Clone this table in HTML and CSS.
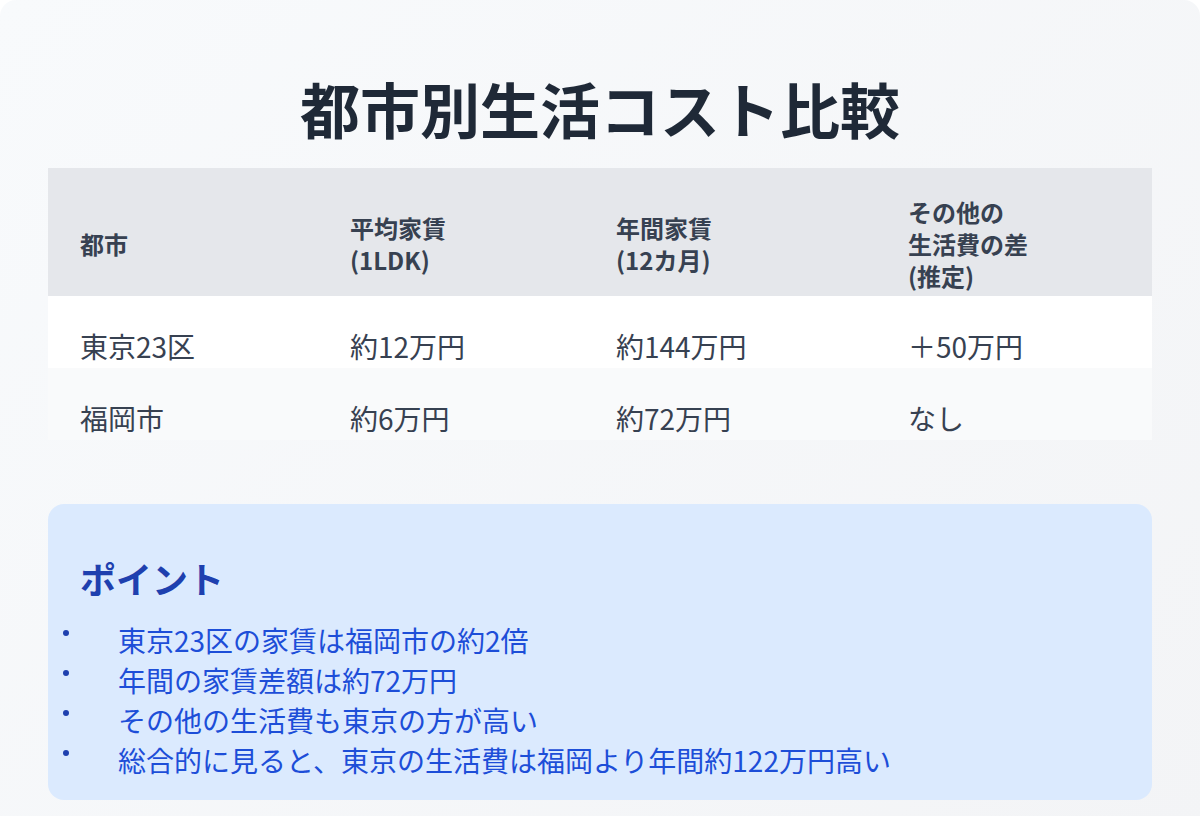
FILE: index.html
```html
<!DOCTYPE html>
<html lang="ja">
<head>
<meta charset="utf-8">
<title>都市別生活コスト比較</title>
<link rel="stylesheet" href="styles.css">
</head>
<body>
<main class="card">
  <h1 class="title">都市別生活コスト比較</h1>
  <table class="cost-table">
    <colgroup>
      <col class="c1"><col class="c2"><col class="c3"><col class="c4">
    </colgroup>
    <thead>
      <tr>
        <th>都市</th>
        <th>平均家賃<br>(1LDK)</th>
        <th>年間家賃<br>(12カ月)</th>
        <th>その他の<br>生活費の差<br>(推定)</th>
      </tr>
    </thead>
    <tbody>
      <tr class="row-a">
        <td>東京23区</td>
        <td>約12万円</td>
        <td>約144万円</td>
        <td>＋50万円</td>
      </tr>
      <tr class="row-b">
        <td>福岡市</td>
        <td>約6万円</td>
        <td>約72万円</td>
        <td>なし</td>
      </tr>
    </tbody>
  </table>
  <section class="points">
    <h2 class="points-title">ポイント</h2>
    <ul class="points-list">
      <li>東京23区の家賃は福岡市の約2倍</li>
      <li>年間の家賃差額は約72万円</li>
      <li>その他の生活費も東京の方が高い</li>
      <li>総合的に見ると、東京の生活費は福岡より年間約122万円高い</li>
    </ul>
  </section>
</main>
</body>
</html>
```

FILE: styles.css
```css
html, body {
  margin: 0;
  padding: 0;
  background: #ffffff;
}

body {
  font-family: "Noto Sans CJK JP", "Noto Sans", sans-serif;
  color: #374151;
}

.card {
  box-sizing: border-box;
  width: 1200px;
  padding: 48px 48px 48px;
  border-radius: 16px;
  background: linear-gradient(135deg, #f8fafc 0%, #f3f4f6 100%);
}

.title {
  margin: 24px 0 24px;
  font-size: 60px;
  line-height: 72px;
  font-weight: 700;
  text-align: center;
  color: #1f2937;
}

.cost-table {
  width: 1104px;
  border-collapse: collapse;
  table-layout: fixed;
}

.c1 { width: 270px; }
.c2 { width: 266px; }
.c3 { width: 292px; }
.c4 { width: 276px; }

.cost-table thead tr {
  background: #e5e7eb;
}

.cost-table th {
  height: 96px;
  padding: 28px 16px 4px 32px;
  font-size: 24px;
  line-height: 32px;
  font-weight: 700;
  text-align: left;
  vertical-align: middle;
  color: #374151;
}

.cost-table td {
  height: 43px;
  padding: 29px 16px 0 32px;
  font-size: 28px;
  line-height: 43px;
  color: #374151;
  vertical-align: middle;
}

.row-a { background: #ffffff; }
.row-b { background: #f9fafb; }

.points {
  margin-top: 64px;
  padding: 52px 32px 20px;
  border-radius: 16px;
  background: #dbeafe;
}

.points-title {
  margin: 0 0 20px;
  font-size: 36px;
  line-height: 44px;
  font-weight: 700;
  color: #1e40af;
}

.points-list {
  margin: 0 0 0 -17px;
  padding: 0;
  list-style: none;
}

.points-list li {
  display: flex;
  font-size: 28px;
  line-height: 40px;
  color: #1d4ed8;
}

.points-list li::before {
  content: "";
  flex: none;
  width: 6px;
  height: 6px;
  margin: 10px 49px 0 0;
  border-radius: 50%;
  background: #1e40af;
}
```
